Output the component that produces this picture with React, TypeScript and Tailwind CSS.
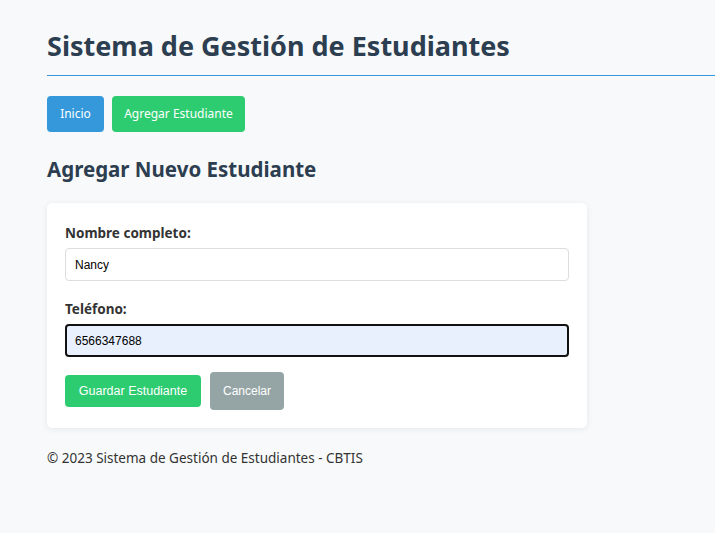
import { useState } from 'react';

export default function App() {
  const [nombre, setNombre] = useState('Nancy');
  const [telefono, setTelefono] = useState('6566347688');

  return (
    <div className="min-h-screen bg-[#f8f9fa] font-['Noto_Sans',sans-serif] text-[#333]">
      <div className="pl-[47px] pt-[26px]">
        <header className="pb-[9px]">
          <h1 className="text-[27px] font-bold leading-[40px] text-[#2c3e50]">
            Sistema de Gestión de Estudiantes
          </h1>
        </header>
        <div className="h-px bg-[#3498db]" />

        <nav className="mt-[20px] flex gap-2">
          <a className="flex h-[36px] w-[57px] items-center justify-center rounded bg-[#3498db] text-[12px] text-white">
            Inicio
          </a>
          <a className="flex h-[36px] w-[133px] items-center justify-center rounded bg-[#2ecc71] text-[12px] text-white">
            Agregar Estudiante
          </a>
        </nav>

        <h2 className="mt-[22px] text-[20.5px] font-bold leading-[30px] text-[#2c3e50]">
          Agregar Nuevo Estudiante
        </h2>

        <form
          className="mt-[19px] w-[540px] rounded-[5px] bg-white px-[18px] pt-[20px] pb-[18px] shadow-[0_1px_6px_rgba(0,0,0,0.08)]"
          onSubmit={(e) => e.preventDefault()}
        >
          <div className="mb-[18px]">
            <label className="mb-[5px] block text-[13.5px] font-bold leading-[20px] text-[#333]">
              Nombre completo:
            </label>
            <input
              value={nombre}
              onChange={(e) => setNombre(e.target.value)}
              className="block h-[33px] w-full rounded border border-[#ddd] bg-white px-[9px] font-['Liberation_Sans',Arial,sans-serif] text-[12px] text-black outline-none"
            />
          </div>

          <div>
            <label className="mb-[5px] block text-[13.5px] font-bold leading-[20px] text-[#333]">
              Teléfono:
            </label>
            <input
              value={telefono}
              onChange={(e) => setTelefono(e.target.value)}
              className="block h-[33px] w-full rounded border-2 border-[#111] bg-[#e8f0fe] px-[8px] font-['Liberation_Sans',Arial,sans-serif] text-[12px] text-black outline-none"
            />
          </div>

          <div className="mt-[15px] flex items-center gap-[9px] font-['Liberation_Sans',Arial,sans-serif]">
            <button
              type="submit"
              className="h-[32px] w-[136px] rounded bg-[#2ecc71] text-[12.5px] text-white"
            >
              Guardar Estudiante
            </button>
            <a className="flex h-[38px] w-[74px] items-center justify-center rounded bg-[#95a5a6] text-[12px] text-white">
              Cancelar
            </a>
          </div>
        </form>

        <footer className="mt-[20px] text-[13.5px] leading-[20px] text-[#333]">
          © 2023 Sistema de Gestión de Estudiantes - CBTIS
        </footer>
      </div>
    </div>
  );
}
